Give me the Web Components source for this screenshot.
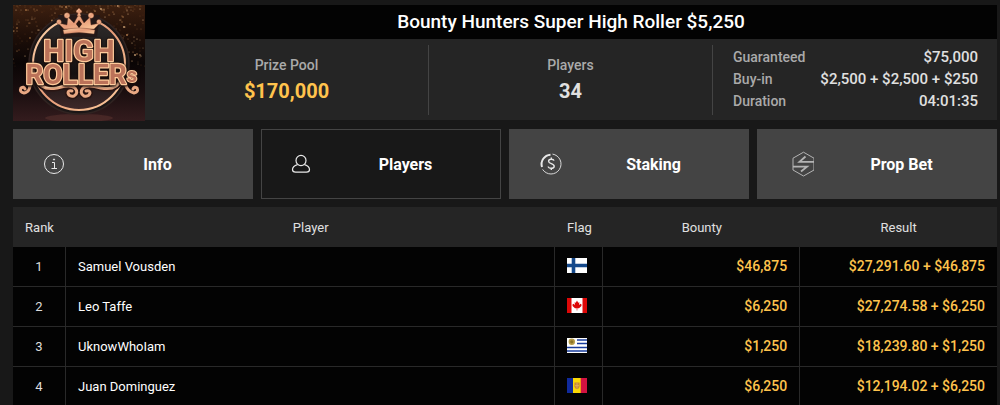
<!DOCTYPE html>
<html lang="en">
<head>
<meta charset="utf-8">
<title>Bounty Hunters Super High Roller</title>
<style>
  html { background: #181818; }
  body { margin: 0; font-family: Roboto, sans-serif; color: #fff; overflow-x: hidden; }
</style>
</head>
<body>
<tournament-page></tournament-page>

<script>
const define = (name, html, setup) => {
  const template = document.createElement('template');
  template.innerHTML = html;
  customElements.define(name, class extends HTMLElement {
    constructor() {
      super();
      this.attachShadow({ mode: 'open' }).append(template.content.cloneNode(true));
    }
    connectedCallback() { if (setup) setup(this, this.shadowRoot); }
  });
};

/* Series emblem: crown, ring and lettering over gold dust */
define('series-logo', `
  <style>
    :host { display: block; }
    svg { display: block; width: 100%; height: 100%; }
    text { font-family: Roboto, sans-serif; font-weight: 700; }
    .lettering { filter: drop-shadow(0 0 1px #1c0d0a) drop-shadow(0 1px 1px #1c0d0a); }
  </style>
  <svg viewBox="0 0 132 116" preserveAspectRatio="xMidYMid slice" role="img" aria-label="High Rollers">
    <defs>
      <linearGradient id="bg" x1="0" y1="0" x2="0" y2="1">
        <stop offset="0" stop-color="#3d2010"/><stop offset=".28" stop-color="#1d0e08"/>
        <stop offset=".5" stop-color="#0a0505"/><stop offset=".75" stop-color="#1a0e0f"/><stop offset="1" stop-color="#341c1e"/>
      </linearGradient>
      <linearGradient id="disc" x1="0" y1="0" x2="0" y2="1">
        <stop offset="0" stop-color="#302c2c"/><stop offset=".6" stop-color="#151111"/><stop offset="1" stop-color="#40292a"/>
      </linearGradient>
      <linearGradient id="gold" x1="0" y1="0" x2="1" y2="1">
        <stop offset="0" stop-color="#ffd9ae"/><stop offset=".5" stop-color="#e69b78"/><stop offset="1" stop-color="#ffcf9f"/>
      </linearGradient>
    </defs>
    <rect width="132" height="116" fill="url(#bg)"/>
    <g id="dust"></g>
    <ellipse cx="66" cy="113" rx="34" ry="4" fill="#5d3430" opacity=".5"/>
    <circle cx="66" cy="59" r="50" fill="#1b1616" stroke="#302321" stroke-width="1.5"/>
    <circle cx="66" cy="59" r="46" fill="url(#disc)" stroke="url(#gold)" stroke-width="2"/>
    <path d="M45 10 L87 10 L84 32 L48 32 Z" fill="#241817"/>
    <g fill="url(#gold)" stroke="#7a3f2b" stroke-width=".4">
      <path d="M51 24 L45 18 L54 20 L55 12 L61 18 L66 9 L71 18 L77 12 L78 20 L87 18 L81 24 Z"/>
      <path d="M50 25 Q66 21 82 25 L81 29 Q66 26 51 29 Z"/>
      <circle cx="46" cy="17" r="2.4"/><circle cx="86" cy="17" r="2.4"/>
      <circle cx="54" cy="10.5" r="2.8"/><circle cx="78" cy="10.5" r="2.8"/>
      <path d="M66 3 L69 6 Q69 8 67 8 L68 11 H64 L65 8 Q63 8 63 6 Z"/>
    </g>
    <path d="M66 15 L69 19 L66 23 L63 19 Z" fill="#27150f"/>
    <g fill="none" stroke-linecap="round">
      <g stroke="#2a1512" stroke-width="6">
        <path d="M24 74 Q28 86 44 83 Q58 79 62 83 Q66 88 61 91 Q56 92 55 88 Q55 85 59 86"/>
        <path d="M108 74 Q104 86 88 83 Q74 79 70 83 Q66 88 71 91 Q76 92 77 88 Q77 85 73 86"/>
      </g>
      <g stroke="#e9a883" stroke-width="3">
        <path d="M17 76 Q18 87 11 88 Q6 87 8 83 Q11 81 12 84"/>
        <path d="M24 74 Q28 86 44 83 Q58 79 62 83 Q66 88 61 91 Q56 92 55 88 Q55 85 59 86"/>
        <path d="M108 74 Q104 86 88 83 Q74 79 70 83 Q66 88 71 91 Q76 92 77 88 Q77 85 73 86"/>
        <path d="M112 79 Q115 87 121 88 Q126 87 124 83 Q121 81 120 84"/>
      </g>
      <g stroke="#ffe0b4" stroke-width=".8">
        <path d="M24 76 Q29 85 44 82 Q58 78 62 82"/>
        <path d="M108 76 Q103 85 88 82 Q74 78 70 82"/>
      </g>
    </g>
    <g class="lettering" text-anchor="middle" paint-order="stroke" stroke-linejoin="round" stroke="#ffcb9b" fill="#bb7259" stroke-width="2.4">
      <text x="66" y="56" font-size="30">HIGH</text>
      <text x="63" y="79" font-size="28">ROLLER</text>
      <text x="119" y="77" font-size="20" stroke-width="2">s</text>
    </g>
  </svg>`,
  (host, root) => {
    const dust = root.getElementById('dust');
    let seed = 7;
    const random = () => (seed = (seed * 16807) % 2147483647) / 2147483647;
    const colors = ['#9c6a3d', '#d99a60', '#6d4123', '#4b2a17', '#f0c08c'];
    for (let i = 0; i < 420; i++) {
      const dot = document.createElementNS('http://www.w3.org/2000/svg', 'circle');
      dot.setAttribute('cx', Math.round(random() * 132));
      dot.setAttribute('cy', Math.round(Math.pow(random(), 1.7) * 62));
      dot.setAttribute('r', random() > 0.85 ? 0.9 : 0.6);
      dot.setAttribute('fill', colors[Math.floor(random() * colors.length)]);
      dot.setAttribute('opacity', random() > 0.5 ? 0.8 : 0.45);
      dust.append(dot);
    }
  });

define('stat-block', `
  <style>
    :host { display: flex; flex-direction: column; align-items: center; justify-content: center; gap: 4px;
            border-right: 1px solid #444; box-sizing: border-box; }
    .label { font-size: 14px; line-height: 20px; font-weight: 500; color: #aaa; }
    .value { font-size: 20px; line-height: 24px; font-weight: 700; color: var(--value-color, #e0e0e0); padding-bottom: 3px; }
  </style>
  <div class="label"><slot name="label"></slot></div>
  <div class="value"><slot></slot></div>`);

define('fact-row', `
  <style>
    :host { display: flex; justify-content: space-between; font-size: 14px; line-height: 22px; font-weight: 500; }
    .label { color: #aaa; }
    .value { color: #e0e0e0; font-size: 15px; }
  </style>
  <span class="label"><slot name="label"></slot></span>
  <span class="value"><slot></slot></span>`);

define('event-banner', `
  <style>
    :host { display: grid; grid-template-columns: 132px 1fr; }
    series-logo { height: 116px; }
    .body { display: flex; flex-direction: column; padding-bottom: 1px; }
    h1 { margin: 0; background: #030303; font-size: 19px; line-height: 34px; font-weight: 500; text-align: center; }
    .stats { flex: 1; display: grid; grid-template-columns: repeat(3, 1fr); background: #252525; padding: 6px 0 5px; }
    .prize { --value-color: #ffc34d; }
    .facts { padding: 1px 19px 0 20px; }
  </style>
  <series-logo></series-logo>
  <div class="body">
    <h1><slot></slot></h1>
    <div class="stats">
      <stat-block class="prize"><span slot="label">Prize Pool</span>$170,000</stat-block>
      <stat-block><span slot="label">Players</span>34</stat-block>
      <div class="facts">
        <fact-row><span slot="label">Guaranteed</span>$75,000</fact-row>
        <fact-row><span slot="label">Buy-in</span>$2,500 + $2,500 + $250</fact-row>
        <fact-row><span slot="label">Duration</span>04:01:35</fact-row>
      </div>
    </div>
  </div>`);

define('tab-button', `
  <style>
    :host { display: block; }
    button { display: grid; grid-template-columns: 32px 1fr; align-items: center; width: 100%; height: 70px;
             margin: 0; padding: 0 24px; border: 1px solid #444; border-radius: 0; background: #444;
             color: #fff; font: 700 16px/24px Roboto, sans-serif; text-align: center; cursor: pointer; }
    :host([active]) button { background: #181818; }
    .icon { display: flex; justify-content: center; }
    .text { padding: 1px 0 0 17px; }
  </style>
  <button type="button"><span class="icon"><slot name="icon"></slot></span><span class="text"><slot></slot></span></button>`);

define('tab-row', `
  <style>
    :host { display: grid; grid-template-columns: repeat(4, 1fr); gap: 8px; }
    svg { display: block; fill: none; stroke: #e8e8e8; }
  </style>
  <tab-button>
    <svg slot="icon" width="26" height="26" viewBox="0 0 26 26" aria-hidden="true">
      <circle cx="13" cy="13" r="9.5"/><path d="M11 11.5H13.5V17.5M10.5 17.5H16"/><circle cx="13" cy="8.5" r=".6" fill="#e8e8e8"/>
    </svg>Info</tab-button>
  <tab-button active>
    <svg slot="icon" width="26" height="26" viewBox="1 0 26 26" aria-hidden="true" stroke-width="1.2">
      <ellipse cx="13" cy="9.5" rx="5" ry="5.2"/><path d="M9.5 13.6C6.5 14.5 4.5 16 4.5 18.5Q4.5 21.2 7.5 21.2H18.5Q21.5 21.2 21.5 18.5C21.5 16 19.5 14.5 16.5 13.6"/>
    </svg>Players</tab-button>
  <tab-button>
    <svg slot="icon" width="26" height="26" viewBox="-1 0 26 26" aria-hidden="true">
      <path d="M14.5 3.1A10 10 0 1 1 4.6 18.4" stroke-width=".9"/><path d="M4 16A9.5 9.5 0 0 1 12.5 3.7" stroke-width="2"/>
      <path d="M16 9.7Q15.7 8.2 13.2 8.2Q10.6 8.2 10.6 10.2C10.6 13.1 16.2 12.1 16.2 15.2Q16.2 17.3 13.3 17.3Q10.5 17.3 10.2 15.5M13.3 6.5V8.2M13.3 17.3V19" stroke-width="1.4"/>
    </svg>Staking</tab-button>
  <tab-button>
    <svg slot="icon" width="32" height="26" viewBox="-9 0 32 26" aria-hidden="true">
      <g stroke="#b4b4b4"><path d="M2.5 7.2L13 1.2L23.5 7.2V19L13 25L2.5 19Z" transform="translate(-.5)"/>
      <path d="M23 10.8H8.5L14.5 5.5M2 15.7H16L10 20.5" stroke-width="1.8"/></g>
    </svg>Prop Bet</tab-button>`);

const FLAGS = {
  Finland: '<rect width="20" height="15" fill="#fff"/><path d="M0 7.5H20M6.5 0V15" stroke="#15498b" stroke-width="3.6"/>',
  Canada: '<rect width="20" height="15" fill="#fff"/><path d="M0 0H4.5V15H0ZM15.5 0H20V15H15.5Z" fill="#dd0808"/><path d="M10 2.5L11.2 4.8L12.4 4.3L12 7L13.5 5.8L14.7 6.7L14.2 8.2L12 10.2H10.3V12.5H9.7V10.2H8L5.8 8.2L5.3 6.7L6.5 5.8L8 7L7.6 4.3L8.8 4.8Z" fill="#dd0808"/>',
  Uruguay: '<rect width="20" height="15" fill="#fff"/><path d="M10 2H20M10 5.5H20M0 9.5H20M0 13H20" stroke="#183c9c" stroke-width="1.7"/><circle cx="4.8" cy="3.8" r="3.2" fill="#b69b47"/><circle cx="4.8" cy="3.8" r="1.6" fill="#8b7428"/>',
  Andorra: '<path d="M0 0H7V15H0Z" fill="#102a9c"/><path d="M6 0H14V15H6Z" fill="#fbd806"/><path d="M13.7 0H20V15H13.7Z" fill="#d31241"/><path d="M7.4 4.5H12.6V8.5Q12.4 10.7 10 11.3Q7.6 10.7 7.4 8.5Z" fill="#c98a35"/><path d="M10 5V10.5M8 7.7H12" stroke="#e6b665" stroke-width=".8"/>'
};

define('country-flag', `
  <style>
    :host { display: block; width: 20px; height: 15px; }
    svg { display: block; width: 100%; height: 100%; }
  </style>
  <svg viewBox="0 0 20 15" role="img"></svg>`,
  (host, root) => {
    const svg = root.querySelector('svg');
    svg.setAttribute('aria-label', host.getAttribute('country'));
    svg.innerHTML = FLAGS[host.getAttribute('country')];
  });

const RESULTS = [
  [1, 'Samuel Vousden', 'Finland', '$46,875', '$27,291.60 + $46,875'],
  [2, 'Leo Taffe', 'Canada', '$6,250', '$27,274.58 + $6,250'],
  [3, 'UknowWhoIam', 'Uruguay', '$1,250', '$18,239.80 + $1,250'],
  [4, 'Juan Dominguez', 'Andorra', '$6,250', '$12,194.02 + $6,250']
];

define('results-table', `
  <style>
    :host { display: block; }
    table { width: 100%; table-layout: fixed; border-collapse: separate; border-spacing: 0; font-size: 13px; line-height: 19px; }
    .rank { width: 53px; } .flag { width: 48px; } .money { width: 20%; }
    th { height: 40px; padding: 0; background: #252525; color: #e0e0e0; font-weight: 400; }
    td { height: 40px; padding: 0 12px; box-sizing: border-box; background: #030303;
         border-right: 1px solid #292929; border-bottom: 1px solid #292929; }
    td:last-child { border-right: 0; }
    td:first-child { text-align: center; color: #ddd; }
    td:nth-child(3) { padding-bottom: 2px; }
    td:nth-child(n+4) { text-align: right; font-size: 14px; font-weight: 500; color: #ffc34d; padding-left: 0; }
  </style>
  <table>
    <colgroup><col class="rank"><col><col class="flag"><col class="money"><col class="money"></colgroup>
    <thead><tr><th>Rank</th><th>Player</th><th>Flag</th><th>Bounty</th><th>Result</th></tr></thead>
    <tbody></tbody>
  </table>`,
  (host, root) => {
    root.querySelector('tbody').innerHTML = RESULTS.map(([rank, name, country, bounty, result]) =>
      `<tr><td>${rank}</td><td>${name}</td><td><country-flag country="${country}"></country-flag></td><td>${bounty}</td><td>${result}</td></tr>`).join('');
  });

define('tournament-page', `
  <style>
    :host { display: flex; flex-direction: column; gap: 8px; padding: 5px 3px 0 13px; }
  </style>
  <event-banner>Bounty Hunters Super High Roller $5,250</event-banner>
  <tab-row></tab-row>
  <results-table></results-table>`);
</script>
</body>
</html>
